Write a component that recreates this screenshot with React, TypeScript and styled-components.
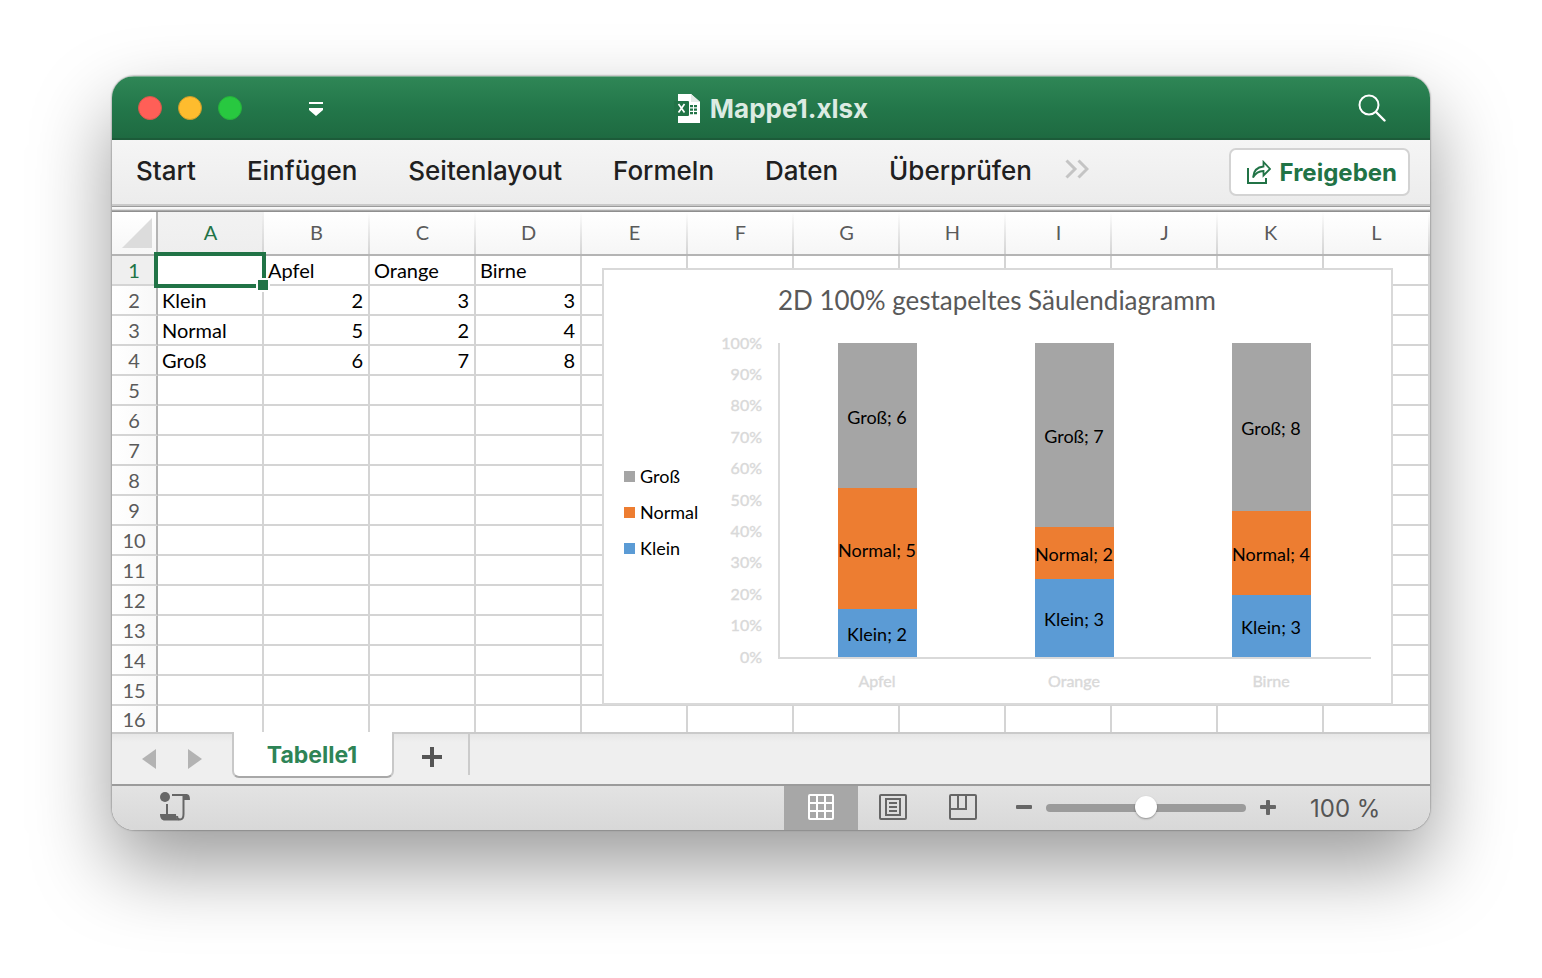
import React, { useState } from "react";
import styled, { createGlobalStyle } from "styled-components";

const UI_FONT = `Inter, "Liberation Sans", sans-serif`;
const CELL_FONT = `Lato, "Open Sans", sans-serif`;
const GREEN = "#217346";
const LINE = "#d4d4d4";

const GlobalStyle = createGlobalStyle`
  *, *::before, *::after { box-sizing: border-box; }
  body { margin: 0; background: #fff; font-family: ${UI_FONT}; }
  button { font: inherit; color: inherit; background: none; border: 0; padding: 0; margin: 0; cursor: pointer; }
  svg { display: block; }
`;

const Desktop = styled.main`
  min-height: 100vh;
  padding: 76px 112px 148px;
`;

const AppWindow = styled.section`
  border-radius: 22px;
  overflow: hidden;
  background: #fff;
  box-shadow:
    0 0 2px rgba(0, 0, 0, 0.6),
    0 36px 80px rgba(0, 0, 0, 0.4);
`;

/* Title bar */

const TitleBar = styled.header`
  display: grid;
  grid-template-columns: 1fr auto 1fr;
  align-items: center;
  height: 64px;
  padding: 0 26px;
  background: linear-gradient(#2f8656, #23774a 50%, #1e6a41);
  border-top: 1px solid #7cae90;
  border-bottom: 2px solid #1c5b39;
`;

const WindowControls = styled.div`
  display: flex;
  align-items: center;
  gap: 16px;
`;

const TrafficLight = styled.button<{ $color: string; $edge: string }>`
  width: 24px;
  height: 24px;
  border-radius: 50%;
  background: ${(p) => p.$color};
  border: 1px solid ${(p) => p.$edge};
`;

const CustomizeButton = styled.button`
  margin-left: 51px;
  padding: 4px 0 0;
`;

const DocumentTitle = styled.h1`
  display: flex;
  align-items: center;
  gap: 10px;
  margin: 0;
  padding-top: 2px;
  font-size: 26px;
  line-height: 32px;
  font-weight: 700;
  color: #dcebe2;
`;

const SearchButton = styled.button`
  justify-self: end;
  margin-right: 18px;
`;

/* Ribbon */

const Ribbon = styled.div`
  display: flex;
  align-items: center;
  height: 72px;
  padding: 0 20px 8px 24px;
  background: linear-gradient(#f5f5f5, #ececec 64px, #c9c9c9 64px, #c9c9c9 66px, #9b9b9b 66px, #9b9b9b 67px, #fbfbfb 67px, #f4f4f4 69px, #c4c4c4 70px, #8f8f8f 71px);
`;

const RibbonTabs = styled.nav`
  display: flex;
  align-items: center;
  gap: 51px;
  flex: 1;
  padding-bottom: 2px;
  font-size: 26px;
  line-height: 32px;
  font-weight: 500;
  color: #202020;
`;

const MoreButton = styled.button`
  margin-left: -18px;
  padding-bottom: 5px;
`;

const ShareButton = styled.button`
  display: flex;
  align-items: center;
  gap: 8px;
  height: 48px;
  padding: 0 11px 0 15px;
  background: #fff;
  border: 2px solid #d3d3d3;
  border-radius: 7px;
  font-size: 24px;
  font-weight: 700;
  color: ${GREEN};
`;

/* Sheet */

const SheetArea = styled.div`
  position: relative;
  overflow: hidden;
  border-bottom: 2px solid #cacaca;
`;

const Grid = styled.table`
  width: 100%;
  table-layout: fixed;
  border-collapse: separate;
  border-spacing: 0;
  font-family: ${CELL_FONT};
  font-size: 20px;
  line-height: 24px;
`;

const RowHeadCol = styled.col`
  width: 46px;
`;

const CornerCell = styled.td`
  height: 44px;
  padding: 0 0 0 10px;
  background: linear-gradient(#fff, #f6f6f6);
  border-right: 2px solid #b4b4b4;
  border-bottom: 2px solid #b4b4b4;
`;

const ColumnHead = styled.th<{ $active: boolean }>`
  height: 44px;
  padding: 0 1px 2px 0;
  font-weight: 400;
  color: ${(p) => (p.$active ? GREEN : "#5a5a5a")};
  background:
    linear-gradient(rgba(212, 212, 212, 0), #d4d4d4) right / 2px 100% no-repeat,
    ${(p) => (p.$active ? "linear-gradient(#f2f2f2, #eeeeee)" : "linear-gradient(#ffffff, #f6f6f6)")};
  border-bottom: 2px solid #b4b4b4;
`;

const SheetRow = styled.tr<{ $cut?: boolean }>`
  height: ${(p) => (p.$cut ? 26 : 30)}px;
  & > * {
    border-bottom: ${(p) => (p.$cut ? 0 : 2)}px solid ${LINE};
  }
`;

const RowHead = styled.th<{ $active: boolean }>`
  padding: 0 0 1px;
  font-weight: 400;
  color: ${(p) => (p.$active ? GREEN : "#5a5a5a")};
  background: ${(p) => (p.$active ? "#efefef" : "linear-gradient(90deg, #ffffff, #f8f8f8)")};
  border-right: 2px solid #b4b4b4;
`;

const Cell = styled.td<{ $numeric: boolean }>`
  position: relative;
  padding: 0 5px 1px 4px;
  text-align: ${(p) => (p.$numeric ? "right" : "left")};
  color: #000;
  background: #fff;
  border-right: 2px solid ${LINE};
`;

const Selection = styled.span`
  position: absolute;
  z-index: 1;
  inset: -4px;
  border: 4px solid ${GREEN};
  &::after {
    content: "";
    position: absolute;
    right: -8px;
    bottom: -8px;
    width: 14px;
    height: 14px;
    background: ${GREEN};
    border: 2px solid #fff;
  }
`;

const ChartObject = styled.figure`
  position: absolute;
  left: 490px;
  top: 56px;
  z-index: 1;
  margin: 0;
  background: #fff;
  border: 2px solid #d9d9d9;
`;

/* Sheet tabs */

const TabBar = styled.div`
  display: flex;
  align-items: flex-start;
  height: 52px;
  background: linear-gradient(#e6e6e6, #efefef 8px);
  border-bottom: 2px solid #9b9b9b;
`;

const TabArrows = styled.div`
  display: flex;
  gap: 30px;
  width: 120px;
  padding: 15px 0 0 29px;
`;

const SheetTab = styled.button`
  position: relative;
  height: 46px;
  min-width: 162px;
  margin-top: -2px;
  padding: 2px 2px 0 0;
  background: #fff;
  border: 2px solid #c8c8c8;
  border-top: 0;
  border-bottom-color: #a8a8a8;
  border-radius: 0 0 7px 7px;
  font-size: 23px;
  font-weight: 700;
  color: #2e8456;
`;

const AddSheet = styled.button`
  display: flex;
  justify-content: center;
  width: 76px;
  height: 41px;
  padding: 13px 0 0 2px;
  border-right: 2px solid #cbcbcb;
`;

/* Status bar */

const StatusBar = styled.footer`
  display: flex;
  align-items: center;
  height: 44px;
  padding: 0 50px 0 48px;
  background: linear-gradient(#e3e3e3, #d8d8d8);
  color: #555;
`;

const Spacer = styled.div`
  flex: 1;
`;

const ViewButton = styled.button<{ $active?: boolean }>`
  display: flex;
  align-items: center;
  justify-content: center;
  width: ${(p) => (p.$active ? 74 : 70)}px;
  height: 44px;
  padding-bottom: 2px;
  background: ${(p) => (p.$active ? "#a7a7a7" : "transparent")};
`;

const ZoomControls = styled.div`
  display: flex;
  align-items: center;
  gap: 14px;
  margin-left: 18px;
`;

const ZoomSlider = styled.input`
  appearance: none;
  width: 200px;
  height: 22px;
  margin: 0;
  background: transparent;
  &::-webkit-slider-runnable-track {
    height: 8px;
    border-radius: 4px;
    background: #9b9b9b;
  }
  &::-webkit-slider-thumb {
    appearance: none;
    width: 22px;
    height: 22px;
    margin-top: -8px;
    border-radius: 50%;
    background: #fff;
    box-shadow: 0 1px 2px rgba(0, 0, 0, 0.35);
  }
`;

const ZoomValue = styled.output`
  width: 70px;
  margin-left: 34px;
  padding-top: 2px;
  font-size: 24px;
  line-height: 32px;
  white-space: nowrap;
`;

const ExcelFileIcon = () => (
  <svg width="26" height="30" viewBox="0 0 26 30" aria-hidden="true">
    <path d="M4 0h13l9 8v21H4z" fill="#fff" />
    <path d="M17 0v8h9z" fill="#c3d3ca" />
    <path d="M17 8V0l9 8z" fill="#e4ebe7" />
    <rect x="0" y="7" width="15" height="15" rx="1" fill="#217346" />
    <path d="M4.500 10l6 8.500M10.500 10l-6 8.500" stroke="#fff" strokeWidth="1.700" />
    <path d="M16 11h3v2.200h-3zM20 11h3v2.200h-3zM16 14.500h3v2.200h-3zM20 14.500h3v2.200h-3zM16 18h3v2.200h-3zM20 18h3v2.200h-3z" fill="#217346" />
  </svg>
);

const ShareIcon = () => (
  <svg width="26" height="26" viewBox="0 0 26 26" fill="none" stroke={GREEN} strokeWidth="2" aria-hidden="true">
    <path d="M2 9v15h18v-5" />
    <path d="M7 18.500c.5-6.500 4-10.500 10.500-11V3l6.500 7-6.500 6.500V12c-5 0-8 2-10.500 6.500z" strokeWidth="1.800" />
  </svg>
);

const MacroIcon = () => (
  <svg width="32" height="32" viewBox="0 0 32 32" aria-hidden="true">
    <circle cx="5" cy="5" r="5" fill="#666" />
    <path d="M12 2h14c3 0 4 2 4 6h-6V4H12z" fill="#666" />
    <path d="M7 12v12" stroke="#666" strokeWidth="2" />
    <path d="M23.500 4v18c0 4-1 5.500-3.500 5.500s-3-2-3-3.500" fill="none" stroke="#666" strokeWidth="2" />
    <path d="M0 22h16c0 3.500 1 6 3.500 6.500H5C1.500 28.500 0 26 0 22z" fill="#666" />
  </svg>
);

const Triangle = ({ flip }: { flip?: boolean }) => (
  <svg width="16" height="20" viewBox="0 0 16 20" aria-hidden="true">
    <path d={flip ? "M1 0v20l14-10z" : "M15 0v20L1 10z"} fill="#b3b3b3" />
  </svg>
);

const COLUMNS = "ABCDEFGHIJKL".split("");
const ROWS = Array.from({ length: 16 }, (_, i) => i + 1);
const DATA: (string | number)[][] = [
  ["", "Apfel", "Orange", "Birne"],
  ["Klein", 2, 3, 3],
  ["Normal", 5, 2, 4],
  ["Groß", 6, 7, 8],
];
const SERIES = [
  { row: 3, color: "#a5a5a5" },
  { row: 2, color: "#ed7d31" },
  { row: 1, color: "#5b9bd5" },
];

const PLOT = { left: 176, top: 75, height: 314, band: 197, bar: 79 };

function StackedChart() {
  const bottom = PLOT.top + PLOT.height;
  return (
    <svg width="787" height="433" viewBox="2 2 787 433" fontFamily={CELL_FONT} role="img" aria-label="2D 100% gestapeltes Säulendiagramm">
      <text x="395" y="42" fontSize="26" textAnchor="middle" fill="#595959">
        2D 100% gestapeltes Säulendiagramm
      </text>
      <g fontSize="18" fill="#000">
        {SERIES.map((s, i) => (
          <g key={s.row}>
            <rect x="22" y={203 + i * 36} width="11" height="11" fill={s.color} />
            <text x="38" y={215 + i * 36}>{DATA[s.row][0]}</text>
          </g>
        ))}
      </g>
      <g fontSize="16" fill="#d9d9d9" stroke="#d9d9d9" strokeWidth="0.4" textAnchor="end">
        {Array.from({ length: 11 }, (_, i) => (
          <text key={i} x="160" y={Math.floor(bottom - (i * PLOT.height) / 10) + 6}>{`${i * 10}%`}</text>
        ))}
      </g>
      <path d={`M${PLOT.left + 1} ${PLOT.top}V${bottom + 1}H769`} fill="none" stroke="#d9d9d9" strokeWidth="2" />
      {[1, 2, 3].map((col) => {
        const total = SERIES.reduce((sum, s) => sum + Number(DATA[s.row][col]), 0);
        const center = PLOT.left + 2 + PLOT.band * (col - 1) + 98;
        let y = PLOT.top;
        return (
          <g key={col} textAnchor="middle">
            {SERIES.map((s) => {
              const top = y;
              const h = (Number(DATA[s.row][col]) / total) * PLOT.height;
              y += h;
              const edge = Math.ceil(top);
              return (
                <g key={s.row}>
                  <rect x={center - 40} y={edge} width={PLOT.bar} height={Math.min(bottom, Math.ceil(y)) - edge} fill={s.color} />
                  <text x={center - 1} y={Math.ceil(top + h / 2) + 8} fontSize="18" fill="#000">
                    {`${DATA[s.row][0]}; ${DATA[s.row][col]}`}
                  </text>
                </g>
              );
            })}
            <text x={center - 1} y="419" fontSize="16" fill="#d9d9d9" stroke="#d9d9d9" strokeWidth="0.4">{DATA[0][col]}</text>
          </g>
        );
      })}
    </svg>
  );
}

export default function App() {
  const [zoom, setZoom] = useState(100);
  return (
    <>
      <GlobalStyle />
      <Desktop>
        <AppWindow>
          <TitleBar>
            <WindowControls>
              <TrafficLight $color="#ff5f57" $edge="#d3594b" aria-label="Schließen" />
              <TrafficLight $color="#febc2e" $edge="#c99a2b" aria-label="Minimieren" />
              <TrafficLight $color="#28c840" $edge="#26b13c" aria-label="Vergrößern" />
              <CustomizeButton aria-label="Symbolleiste anpassen">
                <svg width="14" height="15" viewBox="0 0 14 15" fill="#fff" aria-hidden="true">
                  <path d="M0 0h14v2H0zM0 6h14v2l-7 6-7-6z" />
                </svg>
              </CustomizeButton>
            </WindowControls>
            <DocumentTitle>
              <ExcelFileIcon />
              Mappe1.xlsx
            </DocumentTitle>
            <SearchButton aria-label="Suchen">
              <svg width="28" height="28" viewBox="0 0 28 28" fill="none" stroke="#fff" strokeWidth="2" strokeLinecap="round" aria-hidden="true">
                <circle cx="11" cy="11" r="9.500" />
                <path d="M18 18l8.500 8.500" strokeWidth="2.400" />
              </svg>
            </SearchButton>
          </TitleBar>

          <Ribbon>
            <RibbonTabs aria-label="Menüband">
              {["Start", "Einfügen", "Seitenlayout", "Formeln", "Daten", "Überprüfen"].map((t) => (
                <button key={t}>{t}</button>
              ))}
              <MoreButton aria-label="Weitere Registerkarten">
                <svg width="24" height="20" viewBox="0 0 24 20" fill="none" stroke="#c4c4c4" strokeWidth="3" aria-hidden="true">
                  <path d="M1.500 1.500L10 10l-8.500 8.500M13.500 1.500L22 10l-8.500 8.500" />
                </svg>
              </MoreButton>
            </RibbonTabs>
            <ShareButton>
              <ShareIcon />
              Freigeben
            </ShareButton>
          </Ribbon>

          <SheetArea>
            <Grid>
              <colgroup>
                <RowHeadCol />
                {COLUMNS.map((c) => <col key={c} />)}
              </colgroup>
              <thead>
                <tr>
                  <CornerCell>
                    <svg width="30" height="30" viewBox="0 0 30 30" aria-hidden="true">
                      <path d="M30 0v30H0z" fill="#dcdcdc" />
                    </svg>
                  </CornerCell>
                  {COLUMNS.map((c) => (
                    <ColumnHead key={c} scope="col" $active={c === "A"}>{c}</ColumnHead>
                  ))}
                </tr>
              </thead>
              <tbody>
                {ROWS.map((r) => (
                  <SheetRow key={r} $cut={r === ROWS.length}>
                    <RowHead scope="row" $active={r === 1}>{r}</RowHead>
                    {COLUMNS.map((c, i) => {
                      const value = DATA[r - 1]?.[i];
                      return (
                        <Cell key={c} $numeric={typeof value === "number"}>
                          {value}
                          {r === 1 && i === 0 && <Selection />}
                        </Cell>
                      );
                    })}
                  </SheetRow>
                ))}
              </tbody>
            </Grid>
            <ChartObject>
              <StackedChart />
            </ChartObject>
          </SheetArea>

          <TabBar>
            <TabArrows>
              <button aria-label="Vorheriges Blatt"><Triangle /></button>
              <button aria-label="Nächstes Blatt"><Triangle flip /></button>
            </TabArrows>
            <SheetTab>Tabelle1</SheetTab>
            <AddSheet aria-label="Blatt hinzufügen">
              <svg width="20" height="20" viewBox="0 0 20 20" stroke="#555" strokeWidth="4" aria-hidden="true">
                <path d="M10 0v20M0 10h20" />
              </svg>
            </AddSheet>
          </TabBar>

          <StatusBar>
            <button aria-label="Makro aufzeichnen"><MacroIcon /></button>
            <Spacer />
            <ViewButton $active aria-label="Normalansicht">
              <svg width="26" height="26" viewBox="0 0 26 26" fill="none" stroke="#fff" strokeWidth="2" aria-hidden="true">
                <rect x="1" y="1" width="24" height="24" rx="1" />
                <path d="M9 1v24M17 1v24M1 9h24M1 17h24" />
              </svg>
            </ViewButton>
            <ViewButton aria-label="Seitenlayoutansicht">
              <svg width="28" height="26" viewBox="0 0 28 26" fill="none" stroke="#666" strokeWidth="2" aria-hidden="true">
                <rect x="1" y="1" width="26" height="24" rx="1" />
                <rect x="7" y="5" width="14" height="16" />
                <path d="M10 9h8M10 13h8M10 17h8" />
              </svg>
            </ViewButton>
            <ViewButton aria-label="Seitenumbruchvorschau">
              <svg width="28" height="26" viewBox="0 0 28 26" fill="none" stroke="#666" strokeWidth="2" aria-hidden="true">
                <rect x="1" y="1" width="26" height="24" rx="1" />
                <path d="M9 1v14M17 1v15M1 15h17" />
              </svg>
            </ViewButton>
            <ZoomControls>
              <button aria-label="Verkleinern" onClick={() => setZoom(Math.max(10, zoom - 10))}>
                <svg width="16" height="16" viewBox="0 0 16 16" fill="#666" aria-hidden="true">
                  <rect y="5" width="16" height="4" rx="1" />
                </svg>
              </button>
              <ZoomSlider type="range" min="10" max="190" value={zoom} aria-label="Zoom" onChange={(e) => setZoom(Number(e.target.value))} />
              <button aria-label="Vergrößern" onClick={() => setZoom(Math.min(190, zoom + 10))}>
                <svg width="16" height="16" viewBox="0 0 16 16" fill="#666" aria-hidden="true">
                  <rect y="5" width="16" height="4" rx="1" />
                  <rect x="6" width="4" height="15" rx="1" />
                </svg>
              </button>
            </ZoomControls>
            <ZoomValue>{zoom} %</ZoomValue>
          </StatusBar>
        </AppWindow>
      </Desktop>
    </>
  );
}
